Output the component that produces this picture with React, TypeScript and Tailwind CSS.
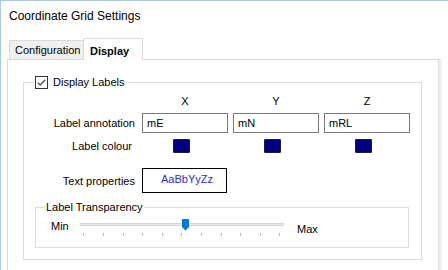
import React from 'react';

const TICKS = Array.from({ length: 11 }, (_, i) => 5.3 + i * 19.6);

function CheckBox() {
  return (
    <svg width="13" height="13" viewBox="0 0 13 13" className="block">
      <rect x="0.5" y="0.5" width="12" height="12" fill="#fff" stroke="#333" />
      <path d="M2.8 6.6 L5.2 9 L10.2 3.8" fill="none" stroke="#333" strokeWidth="1.2" />
    </svg>
  );
}

function Slider() {
  return (
    <svg width="210" height="20" viewBox="0 0 210 20" className="block mt-[4px]">
      <rect x="2.5" y="5.5" width="203" height="2" fill="#e7eae9" stroke="#d6d6d6" />
      {TICKS.map(x => (
        <rect key={x} x={Math.round(x)} y="15" width="1" height="3" fill="#b8b8b8" />
      ))}
      <path d="M104 1.5 Q104 1 104.5 1 H110.5 Q111 1 111 1.5 V9 L107.5 12.5 L104 9 Z" fill="#0078d7" />
    </svg>
  );
}

function Swatch() {
  return <div className="ml-[31px] w-[17px] h-[14px] bg-[#000080] border border-[#1c1c3c] rounded-[1px]" />;
}

export default function App() {
  return (
    <div className="w-[448px] h-[270px] overflow-hidden bg-white border-t border-l border-[#a9cbeb] font-['Liberation_Sans',Arial,sans-serif] text-[11px] leading-[14px] text-black">
      <div className="pl-[8px] pt-[7px] text-[12px] leading-[16px]">Coordinate Grid Settings</div>

      {/* Tabs */}
      <div className="mt-[14px] ml-[8px] flex items-end">
        <div className="w-[74px] h-[19px] bg-[#f0f0f0] border-t border-l border-[#d9d9d9] pl-[5px] pt-[2px]">Configuration</div>
        <div className="relative z-10 -mb-[1px] w-[60px] h-[22px] bg-white border-t border-l border-r border-[#d9d9d9] pl-[6px] pt-[5px] font-bold">Display</div>
      </div>

      {/* Panel */}
      <div className="flex ml-[6px]">
        <div className="w-[432px] h-[230px] border border-[#d9d9d9] pt-[15px]">
          <fieldset className="ml-[15px] w-[399px] border border-[#dcdcdc] pb-[11px]">
            <legend className="ml-[10px] px-[1px]">
              <span className="flex items-center gap-[5px] h-[14px]">
                <CheckBox />
                Display Labels
              </span>
            </legend>

            <div className="mt-[5px] grid grid-cols-[113px_86px_86px_86px] gap-x-[5px]">
              <div />
              <div className="text-center">X</div>
              <div className="text-center">Y</div>
              <div className="text-center">Z</div>
            </div>

            <div className="mt-[5px] grid grid-cols-[113px_86px_86px_86px] gap-x-[5px] items-center">
              <div className="text-right pr-[2px]">Label annotation</div>
              {['mE', 'mN', 'mRL'].map(v => (
                <div key={v} className="h-[20px] border border-[#7a7a7a] pl-[4px] flex items-center">{v}</div>
              ))}
            </div>

            <div className="mt-[6px] grid grid-cols-[113px_86px_86px_86px] gap-x-[5px] items-center">
              <div className="text-right pr-[5px]">Label colour</div>
              <Swatch />
              <Swatch />
              <Swatch />
            </div>

            <div className="mt-[15px] grid grid-cols-[113px_86px_86px_86px] gap-x-[5px] items-center">
              <div className="text-right pr-[2px]">Text properties</div>
              <div className="w-[85px] h-[25px] border border-black pl-[18px] pt-[3px] text-[#2b2bd0]">AaBbYyZz</div>
            </div>

            <fieldset className="mt-[7px] ml-[11px] w-[374px] border border-[#dcdcdc] pb-[9px]">
              <legend className="ml-[9px] px-[1px]">Label Transparency</legend>
              <div className="flex items-start">
                <div className="w-[42px] pl-[15px] mt-[5px]">Min</div>
                <Slider />
                <div className="ml-[9px] mt-[8px]">Max</div>
              </div>
            </fieldset>
          </fieldset>
        </div>
        <div className="w-[3px] bg-[#f0f0f0]" />
      </div>
    </div>
  );
}
